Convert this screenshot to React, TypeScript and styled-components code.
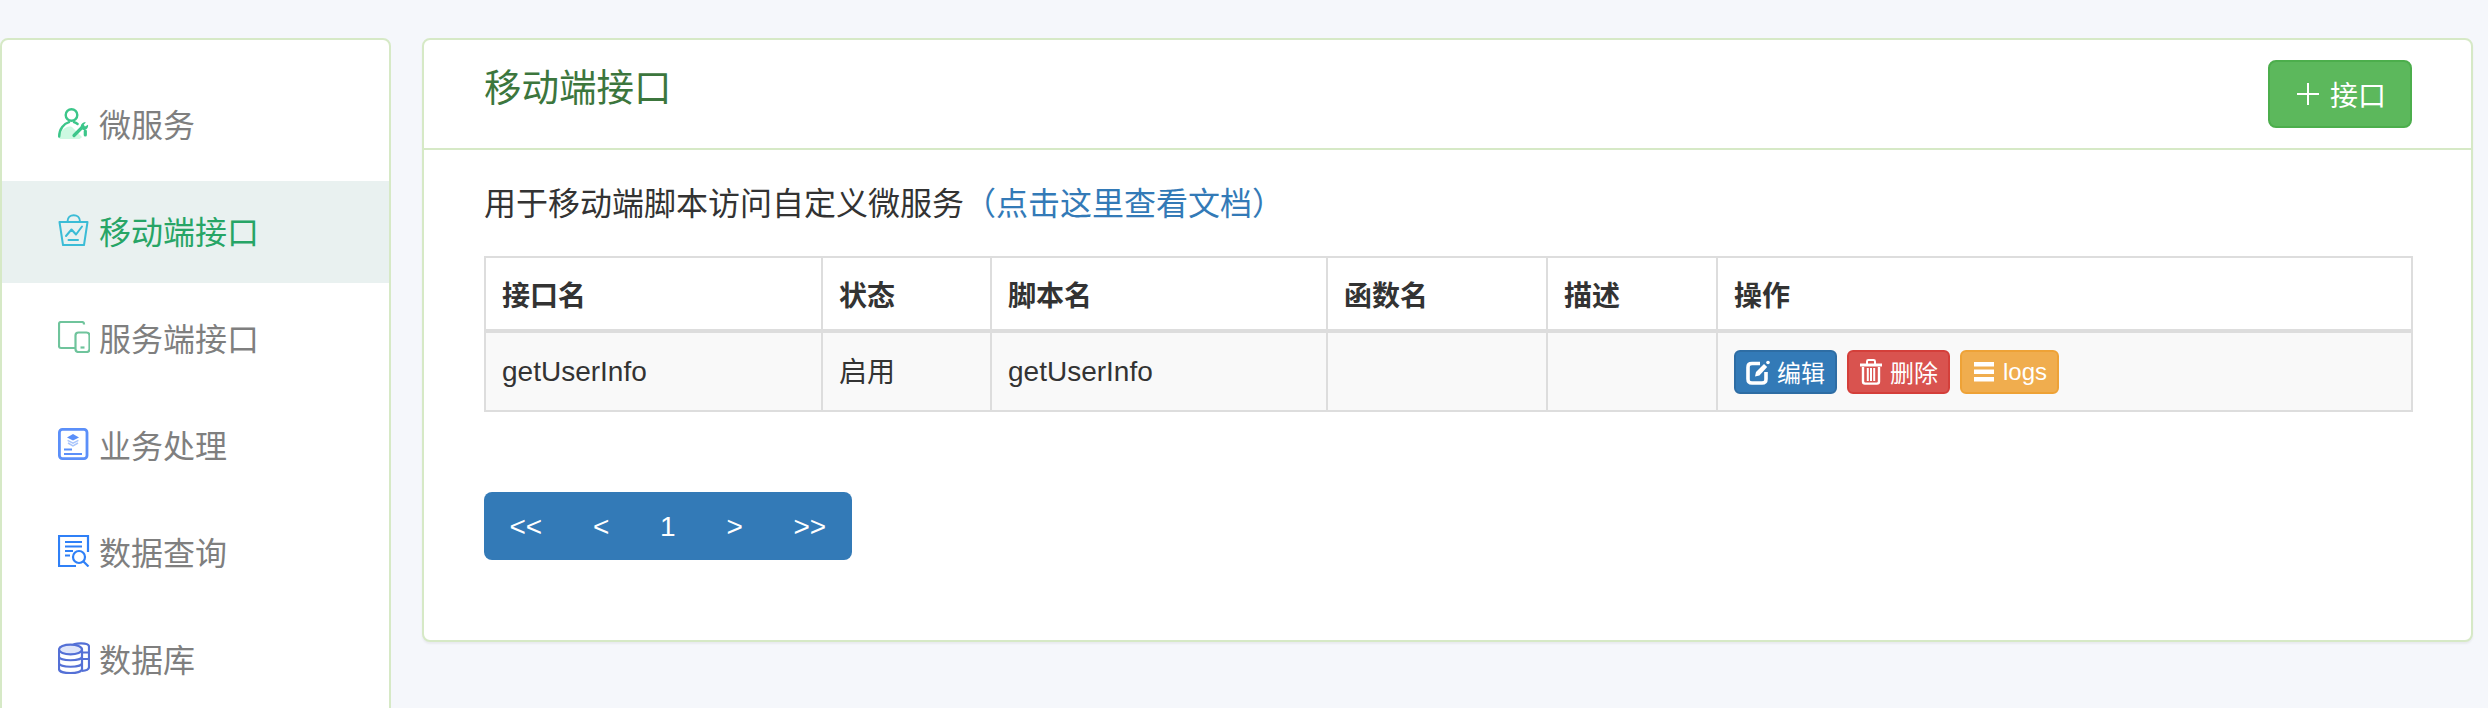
import React from 'react'
import styled, { createGlobalStyle } from 'styled-components'

const GlobalStyle = createGlobalStyle`
  html, body {
    margin: 0;
    height: 708px;
    overflow: hidden;
    background: #f5f7fb;
    font-family: "Liberation Sans", "Noto Sans CJK SC", sans-serif;
    color: #333;
  }
  * {
    box-sizing: border-box;
  }
`

const Page = styled.div`
  display: flex;
  align-items: flex-start;
  gap: 31px;
  padding: 38px 15px 0 0;
  width: 2488px;
  height: 708px;
  overflow: hidden;
`

const Sidebar = styled.nav`
  flex: none;
  width: 391px;
  height: 760px;
  padding-top: 34px;
  background: #fff;
  border: 2px solid #d6e9c6;
  border-radius: 8px;
`

const MenuItem = styled.a<{ $active?: boolean }>`
  display: flex;
  align-items: center;
  gap: 9px;
  height: 102px;
  margin-bottom: 5px;
  padding: 0 0 4px 56px;
  font-size: 32px;
  color: ${p => (p.$active ? '#27a566' : '#7f7f7f')};
  background: ${p => (p.$active ? '#e9f1f0' : 'transparent')};
`

const MenuIcon = styled.svg`
  flex: none;
  width: 32px;
  height: 32px;
`

const Panel = styled.section`
  flex: 1;
  min-width: 0;
  height: 604px;
  background: #fff;
  border: 2px solid #d6e9c6;
  border-radius: 8px;
  box-shadow: 0 2px 2px rgba(0, 0, 0, 0.05);
`

const PanelHeader = styled.header`
  display: flex;
  align-items: flex-start;
  justify-content: space-between;
  height: 110px;
  padding: 20px 59px 0 60px;
  border-bottom: 2px solid #d6e9c6;
`

const PanelTitle = styled.h3`
  margin: 0;
  font-size: 37.5px;
  font-weight: 400;
  line-height: 56px;
  color: #3c763d;
`

const Button = styled.a<{ $bg: string; $border: string }>`
  display: inline-flex;
  align-items: center;
  color: #fff;
  background: ${p => p.$bg};
  border: 2px solid ${p => p.$border};
`

const AddButton = styled(Button)`
  gap: 11px;
  height: 68px;
  padding: 0 24px 0 27px;
  font-size: 28px;
  border-radius: 8px;
`

const ActionButton = styled(Button)`
  gap: 7px;
  height: 44px;
  padding: 0 10px;
  font-size: 24px;
  border-radius: 6px;
`

const PanelBody = styled.div`
  padding: 32px 59px 0 60px;
`

const Intro = styled.p`
  margin: 0 0 30px;
  font-size: 32px;
  line-height: 44px;
`

const DocLink = styled.a`
  color: #337ab7;
`

const Table = styled.table`
  width: 1927px;
  table-layout: fixed;
  border-collapse: collapse;
  font-size: 28px;
`

const Th = styled.th<{ $width: number }>`
  width: ${p => p.$width}px;
  height: 74px;
  padding: 0 16px;
  text-align: left;
  font-weight: 700;
  border: 2px solid #ddd;
  border-bottom-width: 4px;
`

const Td = styled.td<{ $cjk?: boolean }>`
  height: 80px;
  padding: 0 16px ${p => (p.$cjk ? '4px' : '0')};
  background: #f9f9f9;
  border: 2px solid #ddd;
`

const Actions = styled.div`
  display: flex;
  gap: 10px;
`

const Pager = styled.div`
  display: inline-flex;
  align-items: center;
  height: 68px;
  margin-top: 80px;
  background: #337ab7;
  border-radius: 8px;
  overflow: hidden;
`

const PageLink = styled.a`
  padding: 2px 25.4px 0;
  font-size: 28px;
  line-height: 66px;
  color: #fff;
`

const BtnIcon = styled.svg`
  flex: none;
  width: 24px;
  height: 26px;
`

const PlusIcon = styled.svg`
  flex: none;
  width: 22px;
  height: 22px;
`

const icons: Record<string, React.ReactNode> = {
  service: (
    <>
      <path d="M1 31 C3 34 21 35 24 30 L14 20 C8 18 2 24 1 31Z" fill="#cdf9e2" />
      <circle cx="13.5" cy="8" r="5.8" fill="none" stroke="#3cc68a" strokeWidth="2.4" />
      <path d="M1.2 29.5 C1.2 22 6 16.5 11 15.2 M16 15.2 C17.5 15.6 18.6 16.2 19.6 17" fill="none" stroke="#3cc68a" strokeWidth="2.4" strokeLinecap="round" />
      <path d="M16 28.5 L24.5 20 M27.3 24 L27.3 28" fill="none" stroke="#3cc68a" strokeWidth="3.2" strokeLinecap="round" />
      <path d="M23 21.4 C21.8 17.5 25.2 14.8 27.8 15.4 L25.7 17.8 L27 19.6 L30 17.8 C30.8 21.4 27.2 23.8 25 22.8Z" fill="#3cc68a" />
    </>
  ),
  mobile: (
    <g fill="none" stroke="#3bbcd6" strokeWidth="2" strokeLinejoin="round" strokeLinecap="round">
      <path d="M1.5 8 H29.5 L26 31 H5Z" />
      <path d="M9.5 7.5 C9.5 -1 22 -1 22 7.5" />
      <path d="M8 22 L13.5 15.5 L18 20.5 L24 12.5" />
      <path d="M10.5 26 H20" />
    </g>
  ),
  server: (
    <g fill="none" stroke="#6fc49c" strokeWidth="2.2" strokeLinejoin="round">
      <path d="M26 3.5 V3 C26 1.5 25 1 24 1 H3 C1.8 1 1 1.8 1 3 V25 C1 26 1.8 27 3 27 H17" />
      <rect x="17.5" y="11.5" width="14" height="19.5" rx="3" />
      <path d="M22.5 26.5 H26.5" />
    </g>
  ),
  business: (
    <>
      <rect x="1.4" y="1.4" width="27.6" height="29.2" rx="3" fill="#fff" stroke="#5b8ff9" strokeWidth="2.8" />
      <path d="M15 6 L21 9.4 L15 12.6 L9 9.4Z" fill="#5b8ff9" />
      <path d="M9.6 12.4 L15 15.2 L20.4 12.4 M10 15 L15 17.8 L20 15" fill="none" stroke="#a9c5fb" strokeWidth="1.5" />
      <path d="M6 21.5 H14 M6 26 H24" fill="none" stroke="#5b8ff9" strokeWidth="2.2" />
    </>
  ),
  query: (
    <g fill="none" stroke="#2f80f7" strokeWidth="2.2">
      <path d="M30 17 V1 H1 V31 H18" />
      <path d="M7 7 H24 M7 11.5 H24 M7 16 H15 M7 20.5 H12" />
      <circle cx="21" cy="22" r="6" />
      <path d="M25.5 26.5 L30.5 31.5" />
    </g>
  ),
  database: (
    <g fill="none" stroke="#5470d6" strokeWidth="2.2">
      <path d="M14 4 C16 0.5 31 0.5 31 4.5 V25 C31 27 28 28.6 24 28.8 M24 10.5 H31 M24 17 H31" />
      <ellipse cx="12.5" cy="7.5" rx="11.5" ry="4.8" fill="#dfe5f9" />
      <path d="M1 7.5 V27 C1 32.5 24 32.5 24 27 V7.5 M1 14.5 C1 19.5 24 19.5 24 14.5 M1 21 C1 26 24 26 24 21" />
    </g>
  )
}

const menu = [
  { key: 'service', label: '微服务' },
  { key: 'mobile', label: '移动端接口', active: true },
  { key: 'server', label: '服务端接口' },
  { key: 'business', label: '业务处理' },
  { key: 'query', label: '数据查询' },
  { key: 'database', label: '数据库' }
]

const columns = [
  { label: '接口名', width: 337 },
  { label: '状态', width: 169 },
  { label: '脚本名', width: 336 },
  { label: '函数名', width: 220 },
  { label: '描述', width: 170 },
  { label: '操作', width: 695 }
]

const EditIcon = () => (
  <BtnIcon viewBox="0 0 24 26">
    <path d="M14 4.5 H6 C3 4.5 2 5.5 2 8.5 V20 C2 23 3 24 6 24 H16 C19 24 20 23 20 20 V13" fill="none" stroke="#fff" strokeWidth="3.6" />
    <path d="M9 17.5 L10 13 L18 5 L21.2 8 L13.4 16.4Z" fill="#fff" />
    <circle cx="22" cy="3.5" r="1.8" fill="#fff" />
  </BtnIcon>
)

const TrashIcon = () => (
  <BtnIcon viewBox="0 0 24 26">
    <path d="M1 6 H23" stroke="#fff" strokeWidth="3" fill="none" />
    <path d="M8 5 V2.4 C8 1.4 8.6 1 9.4 1 H14.6 C15.4 1 16 1.4 16 2.4 V5" stroke="#fff" strokeWidth="2" fill="none" />
    <path d="M4 8 V22.6 C4 24 4.6 24.6 6 24.6 H18 C19.4 24.6 20 24 20 22.6 V8" stroke="#fff" strokeWidth="2.4" fill="none" />
    <path d="M8.8 9 V22 M12 9 V22 M15.2 9 V22" stroke="#fff" strokeWidth="2" fill="none" />
  </BtnIcon>
)

const ListIcon = () => (
  <BtnIcon viewBox="0 0 24 26">
    <path d="M2 3 H22 V7.5 H2Z M2 10.5 H22 V15 H2Z M2 18 H22 V22.5 H2Z" fill="#fff" />
  </BtnIcon>
)

const App = () => {
  return (
    <>
      <GlobalStyle />
      <Page>
        <Sidebar>
          {menu.map(item => (
            <MenuItem key={item.key} $active={item.active}>
              <MenuIcon viewBox="0 0 32 32">{icons[item.key]}</MenuIcon>
              {item.label}
            </MenuItem>
          ))}
        </Sidebar>
        <Panel>
          <PanelHeader>
            <PanelTitle>移动端接口</PanelTitle>
            <AddButton $bg="#5cb85c" $border="#4cae4c">
              <PlusIcon viewBox="0 0 22 22">
                <path d="M11 0 V22 M0 11 H22" stroke="#fff" strokeWidth="2" />
              </PlusIcon>
              接口
            </AddButton>
          </PanelHeader>
          <PanelBody>
            <Intro>
              用于移动端脚本访问自定义微服务
              <DocLink>（点击这里查看文档）</DocLink>
            </Intro>
            <Table>
              <thead>
                <tr>
                  {columns.map(col => (
                    <Th key={col.label} $width={col.width}>
                      {col.label}
                    </Th>
                  ))}
                </tr>
              </thead>
              <tbody>
                <tr>
                  <Td>getUserInfo</Td>
                  <Td $cjk>启用</Td>
                  <Td>getUserInfo</Td>
                  <Td />
                  <Td />
                  <Td>
                    <Actions>
                      <ActionButton $bg="#337ab7" $border="#2e6da4">
                        <EditIcon />
                        编辑
                      </ActionButton>
                      <ActionButton $bg="#d9534f" $border="#d43f3a">
                        <TrashIcon />
                        删除
                      </ActionButton>
                      <ActionButton $bg="#f0ad4e" $border="#eea236">
                        <ListIcon />
                        logs
                      </ActionButton>
                    </Actions>
                  </Td>
                </tr>
              </tbody>
            </Table>
            <Pager>
              <PageLink>&lt;&lt;</PageLink>
              <PageLink>&lt;</PageLink>
              <PageLink>1</PageLink>
              <PageLink>&gt;</PageLink>
              <PageLink>&gt;&gt;</PageLink>
            </Pager>
          </PanelBody>
        </Panel>
      </Page>
    </>
  )
}

export default App
